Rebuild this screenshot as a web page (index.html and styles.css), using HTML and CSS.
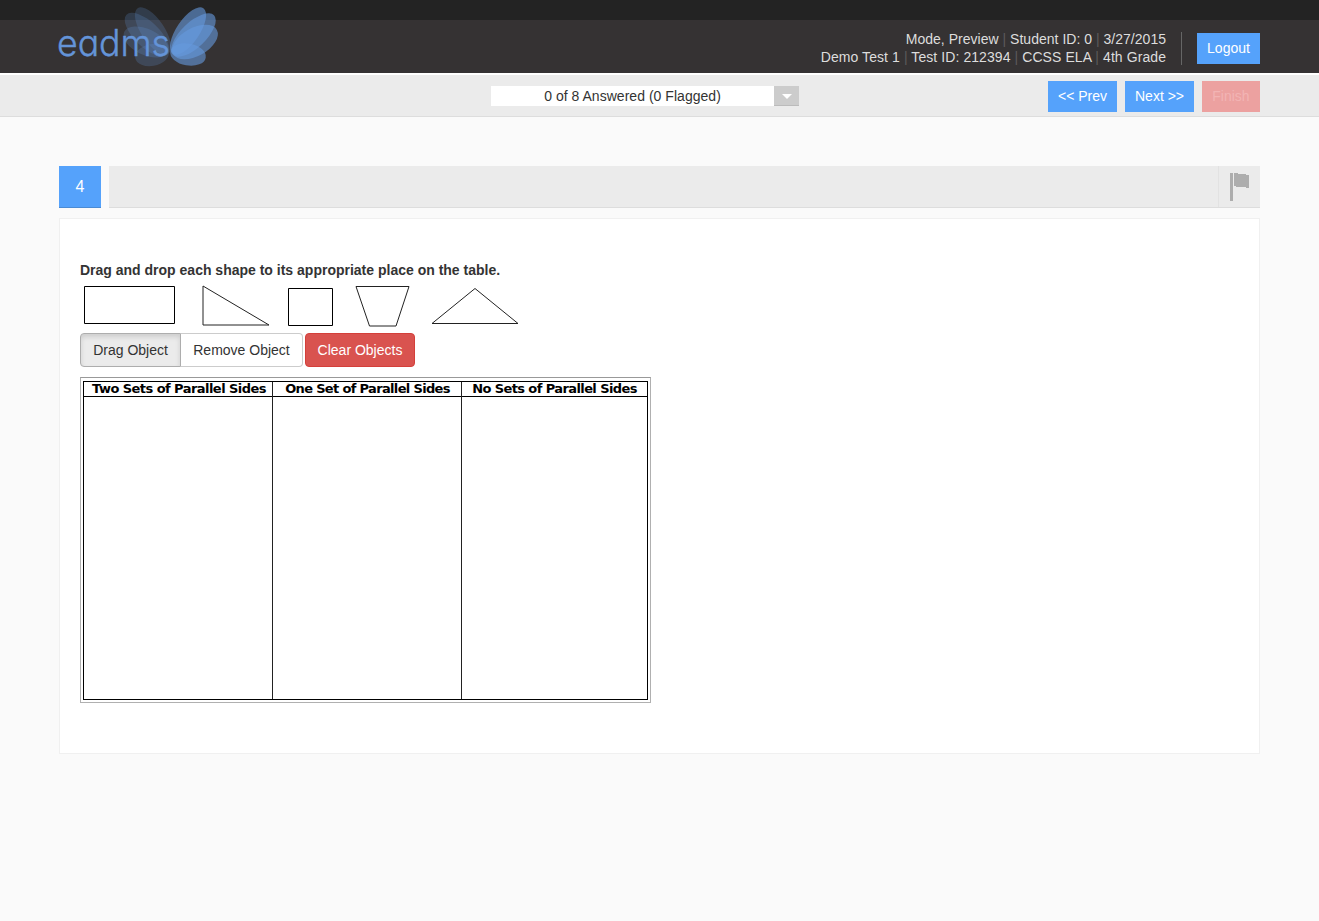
FILE: index.html
```html
<!DOCTYPE html>
<html lang="en">
<head>
<meta charset="utf-8">
<title>eadms</title>
<link rel="stylesheet" href="styles.css">
</head>
<body>
<header class="header">
  <div class="container header-row">
    <svg class="logo" width="180" height="73" viewBox="0 0 180 73">
      <g fill="#6494d4" fill-opacity=".23">
        <ellipse cx="94" cy="31" rx="27.500" ry="11.500" transform="rotate(56 94 31)"/>
        <ellipse cx="88" cy="34.500" rx="28.500" ry="12.500" transform="rotate(44 88 34.500)"/>
        <ellipse cx="87" cy="42" rx="24" ry="13" transform="rotate(25 87 42)"/>
        <ellipse cx="93" cy="55" rx="17" ry="11" transform="rotate(-10 93 55)"/>
      </g>
      <g fill="#6699dd" fill-opacity=".6">
        <ellipse cx="129" cy="31" rx="27.500" ry="11.500" transform="rotate(-56 129 31)"/>
        <ellipse cx="134.500" cy="35" rx="28.500" ry="12.500" transform="rotate(-44 134.500 35)"/>
        <ellipse cx="136" cy="42" rx="25" ry="14" transform="rotate(-29 136 42)"/>
        <ellipse cx="129" cy="54.500" rx="18" ry="11" transform="rotate(10 129 54.500)"/>
      </g>
      <text class="logo-text" x="-2" y="56" textLength="113" lengthAdjust="spacingAndGlyphs">eadms</text>
    </svg>
    <div class="session">
      <div class="info">
        <div class="info-a">Mode, Preview <i>|</i> Student ID: 0 <i>|</i> 3/27/2015</div>
        <div class="info-b">Demo Test 1 <i>|</i> Test ID: 212394 <i>|</i> CCSS ELA <i>|</i> 4th Grade</div>
      </div>
      <button class="btn logout">Logout</button>
    </div>
  </div>
</header>
<nav class="toolbar">
  <div class="container toolbar-row">
    <div class="picker"><span class="picker-text">0 of 8 Answered (0 Flagged)</span><span class="picker-arrow"></span></div>
    <div class="nav-buttons">
      <button class="btn prev">&lt;&lt; Prev</button>
      <button class="btn next">Next &gt;&gt;</button>
      <button class="btn finish">Finish</button>
    </div>
  </div>
</nav>
<main class="container">
  <div class="question-bar">
    <div class="number">4</div>
    <div class="strip"><div class="flag"><svg width="20" height="29" viewBox="0 0 20 29" fill="#adadad" shape-rendering="crispEdges"><path d="M0 0h3v28H0zM4 0h4v1h8v1h3v13h-3v-1H6v-1H4z"/></svg></div></div>
  </div>
  <section class="card">
    <h1 class="prompt">Drag and drop each shape to its appropriate place on the table.</h1>
    <svg class="shapes" width="445" height="44" viewBox="80 284 445 44" fill="none" stroke="#000">
      <path d="M84.500 286.500h90v37h-90zM288.500 288.500h44v37h-44z"/>
      <path stroke="#222" d="M203 286V325H269ZM356 286.500H409L396 326H369.500ZM432 323.500L475 288.500L518 323.500Z"/>
    </svg>
    <div class="tools">
      <button class="tool drag">Drag Object</button><button class="tool remove">Remove Object</button><button class="tool clear">Clear Objects</button>
    </div>
    <div class="board">
      <div class="grid">
        <div class="cell"><span class="t1">Two Sets of Parallel Sides</span></div>
        <div class="cell"><span class="t2">One Set of Parallel Sides</span></div>
        <div class="cell"><span class="t3">No Sets of Parallel Sides</span></div>
      </div>
    </div>
  </section>
</main>
</body>
</html>
```
FILE: styles.css
```css
* { box-sizing: border-box; }
body { margin: 0; background: #fafafa; color: #333; font: 14px/18px "Liberation Sans", Arial, sans-serif; }
button { font: inherit; border: 0; padding: 0; margin: 0; white-space: nowrap; }
.container { width: 1201px; margin-left: 59px; }
.header { height: 75px; background: #353233; border-top: 20px solid #232323; border-bottom: 2px solid #fff; }
.header-row { display: flex; justify-content: space-between; }
.logo { margin-top: -20px; display: block; overflow: visible; }
.logo-text { font-family: Inter, sans-serif; font-weight: 300; font-size: 37px; font-feature-settings: "cv11"; fill: #6494d8; stroke: #6494d8; stroke-width: .4px; }
.session { display: flex; padding-top: 10px; }
.info { color: #ddd; text-align: right; white-space: nowrap; height: 33px; margin-top: 2px; padding-right: 15px; border-right: 1px solid #666; line-height: 18px; }
.info-a { margin-top: -2px; letter-spacing: .02px; }
.info-b { letter-spacing: .08px; }
.info i { font-style: normal; color: #5c5a5b; }
.btn { height: 31px; background: #55a2fb; color: #fff; padding-bottom: 1px; }
.logout { width: 63px; margin: 3px 0 0 15px; }
.toolbar { height: 42px; background: #ebebeb; border-bottom: 1px solid #ddd; }
.toolbar-row { display: flex; justify-content: space-between; padding-top: 6px; }
.picker { margin: 5px 0 0 432px; width: 308px; height: 20px; display: flex; }
.picker-text { flex: 1; background: #fff; text-align: center; line-height: 20px; letter-spacing: .03px; }
.picker-arrow { width: 25px; background: #ccc; border-bottom: 1px solid #bbb; display: flex; justify-content: center; padding-top: 8px; }
.picker-arrow::after { content: ""; height: 0; border: 5px solid transparent; border-top-color: #fff; border-bottom: 0; }
.nav-buttons { display: flex; gap: 8px; }
.prev, .next { width: 69px; }
.finish { width: 58px; background: #eca1a0; color: #f2b4b4; }
.question-bar { display: flex; gap: 8px; margin-top: 49px; height: 42px; }
.number { width: 42px; background: #55a2fb; border-bottom: 1px solid #4a8bd4; color: #fff; text-align: center; line-height: 41px; font-size: 16px; }
.strip { flex: 1; background: #ebebeb; border-bottom: 1px solid #ddd; display: flex; justify-content: flex-end; }
.flag { width: 42px; border-left: 1px solid #e2e2e2; padding: 7px 0 0 11px; }
.card { margin-top: 10px; height: 536px; background: #fff; border: 1px solid #f0f0f0; padding: 42px 20px 0; }
.prompt { margin: 0; font-size: 14px; line-height: 18px; height: 23px; }
.shapes { display: block; }
.tools { display: flex; margin-top: 5px; height: 34px; }
.tool { height: 34px; border: 1px solid #ccc; background: #fff; color: #333; }
.drag { width: 101px; background: #ebebeb; border-color: #adadad; border-radius: 4px 0 0 4px; box-shadow: inset 0 3px 5px rgba(0,0,0,.125); }
.remove { width: 122px; border-left: 0; border-radius: 0 4px 4px 0; }
.clear { width: 110px; margin-left: 2px; background: #d9534f; border-color: #d43f3a; border-radius: 4px; color: #fff; }
.board { width: 571px; height: 326px; margin-top: 10px; padding: 3px 2px 2px; border: 1px solid #b0b0b0; border-top-color: #999; }
.grid { height: 319px; width: 565px; border: 1px solid #000; display: grid; grid-template-columns: 189px 189px 185px; background: linear-gradient(#000, #000) 0 14px / 100% 1px no-repeat; }
.cell { border-right: 1px solid #222; text-align: center; font: bold 13px/13px "DejaVu Sans", Verdana, sans-serif; color: #000; white-space: nowrap; }
.cell:last-child { border-right: 0; }
.cell span { letter-spacing: -.6px; }
.cell .t1 { letter-spacing: -.55px; margin-left: 2px; }
.cell .t2 { letter-spacing: -.66px; margin-left: 1px; }
```
